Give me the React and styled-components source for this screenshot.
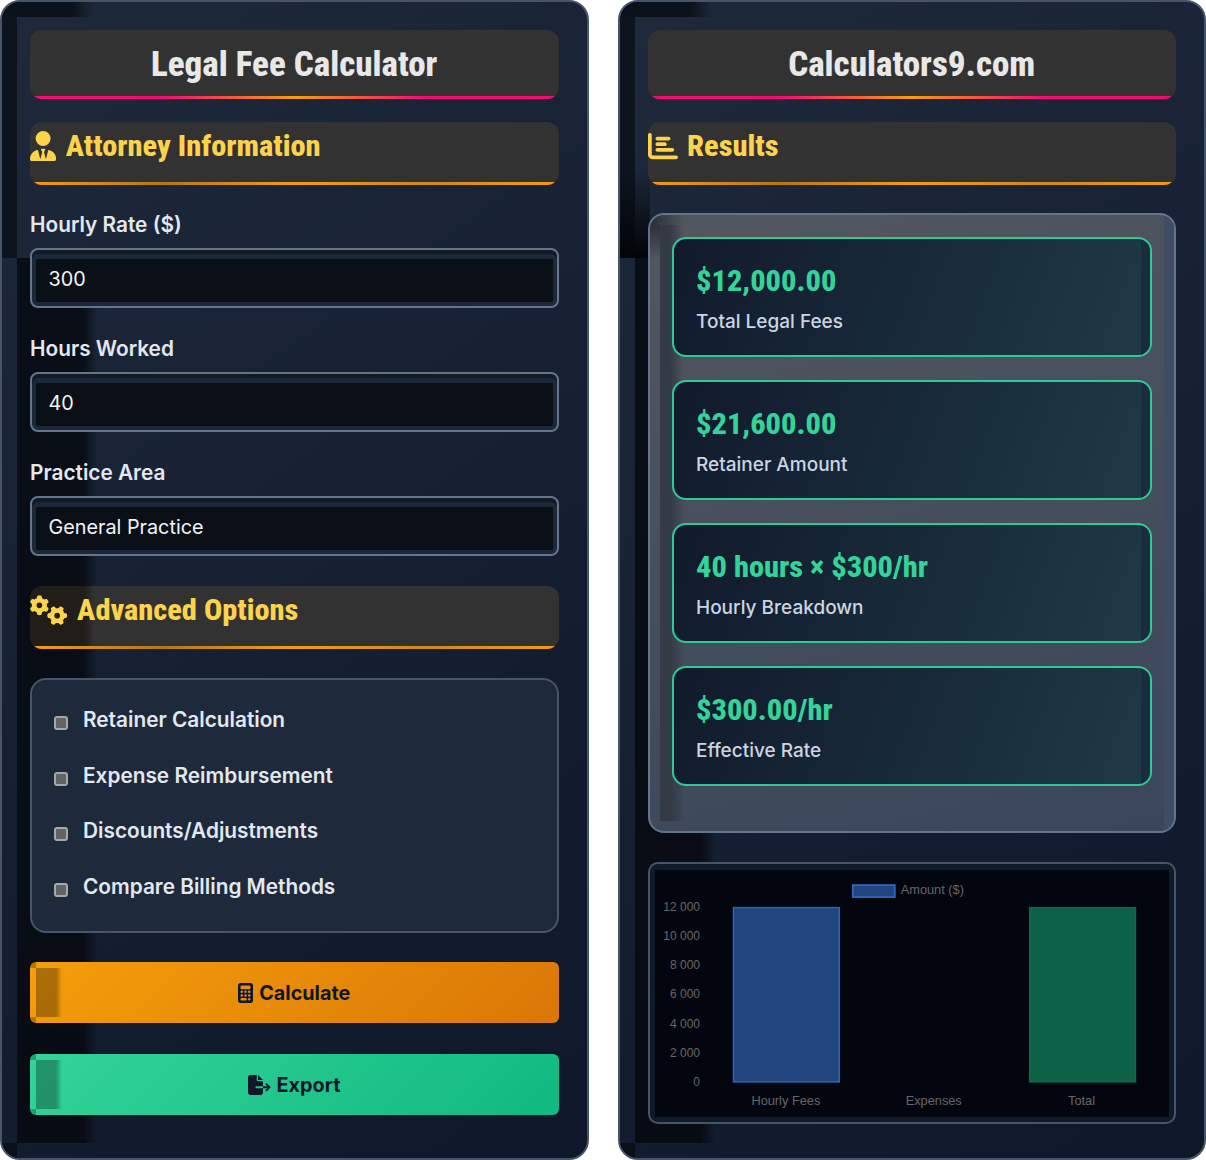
import React from "react";
import styled, { createGlobalStyle } from "styled-components";
import {
  FaUserTie,
  FaGears,
  FaCalculator,
  FaFileExport,
  FaChartBar,
} from "react-icons/fa6";

const GlobalStyle = createGlobalStyle`
  body {
    margin: 0;
    background: #fff;
    font-family: Inter, "Liberation Sans", sans-serif;
  }
  * { box-sizing: border-box; }
`;

const Page = styled.div`
  display: grid;
  grid-template-columns: minmax(0, 1fr) minmax(0, 1fr);
  grid-template-rows: minmax(0, 1fr);
  gap: 29px;
  width: 1206px;
  height: 1160px;
`;

const Panel = styled.section`
  position: relative;
  isolation: isolate;
  border: 2px solid #475569;
  border-radius: 20px;
  padding: 28px;
  background: linear-gradient(145deg, #1e293b, #0f172a);

  &::before {
    content: "";
    position: absolute;
    inset: 0;
    z-index: -1;
    border-radius: 18px;
    background:
      linear-gradient(180deg, transparent, #020408) 0 ${(p) => (p.$deep ? "170px" : "-300px")} / 30px 86px no-repeat,
      linear-gradient(90deg, #0c121b 70px, transparent 92px) 0 0 / 95px 15px no-repeat,
      linear-gradient(#0d141e, #0d141e) 0 0 / 15px 256px no-repeat,
      linear-gradient(90deg, rgba(6, 8, 14, 0.8) 66px, transparent 80px) 15px 256px / 80px 885px no-repeat,
      linear-gradient(#0a0f1a, #0a0f1a) 0 1141px / 15px 15px no-repeat;
  }
`;

const TitleBar = styled.header`
  position: relative;
  overflow: hidden;
  height: 69px;
  margin-bottom: 23px;
  padding-top: 1px;
  display: flex;
  align-items: center;
  justify-content: center;
  border-radius: 12px;
  background: #323232;

  &::after {
    content: "";
    position: absolute;
    left: 0;
    right: 0;
    bottom: 0;
    height: 3px;
    background: linear-gradient(90deg, #f50a78 25%, #f59e0b 50%, #f50a78 75%);
  }
`;

const Title = styled.h1`
  margin: 0;
  font: 800 35px/44px Roboto, sans-serif;
  font-stretch: 75%;
  color: #e8e8e8;
`;

const SectionBar = styled.div`
  position: relative;
  overflow: hidden;
  height: 63px;
  margin-top: ${(p) => p.$top || 0}px;
  margin-bottom: ${(p) => p.$gap}px;
  padding-bottom: 15px;
  display: flex;
  align-items: center;
  gap: 9.6px;
  border-radius: 12px;
  color: #fcd34d;
  background: ${(p) =>
    p.$shaded
      ? "linear-gradient(90deg, #211d19 55px, #323232 64px)"
      : "#323232"};

  svg {
    width: ${(p) => p.$icon}px;
    height: 30px;
    flex: none;
  }

  &::after {
    content: "";
    position: absolute;
    left: 0;
    right: 0;
    bottom: 0;
    height: 3px;
    background: linear-gradient(90deg, #f59e0b, #b5780f 25%, #f59e0b 50%, #d08a0e 75%, #f59e0b);
  }
`;

const SectionTitle = styled.h2`
  margin: 0;
  font: 800 30.4px/36px Roboto, sans-serif;
  font-stretch: 75%;
  color: #fcd34d;
`;

const Field = styled.div`
  display: flex;
  flex-direction: column;
  margin-bottom: 28px;
`;

const Label = styled.label`
  height: 24px;
  margin-bottom: 12px;
  padding-top: 1px;
  font: 600 20.8px/24px Inter, sans-serif;
  color: #e2e8f0;
`;

const insetStrips = `
  box-shadow:
    inset 0 4px 0 #111a25,
    inset 0 9px 0 #1c2839,
    inset 4px 0 0 #1c2839,
    inset -4px 0 0 #1c2839,
    inset 0 -4px 0 #1c2839;
`;

const TextInput = styled.input`
  width: 100%;
  height: 60px;
  padding: 2px 16.5px 0;
  border: 2px solid #64748b;
  border-radius: 8px;
  outline: none;
  font: 400 19.8px Inter, sans-serif;
  color: #f1f5f9;
  background: #0b1017;
  ${insetStrips}
`;

const SelectInput = styled(TextInput).attrs({ as: "select" })`
  appearance: none;
`;

const OptionsCard = styled.div`
  height: 255px;
  margin-bottom: 29px;
  padding: 12px 22px;
  display: flex;
  flex-direction: column;
  border: 2px solid #475569;
  border-radius: 16px;
  background: #1e293b;
`;

const OptionRow = styled.label`
  height: 55.7px;
  display: flex;
  align-items: center;
  gap: 15px;
  font: 600 20.8px/24px Inter, sans-serif;
  color: #e2e8f0;
`;

const Check = styled.input`
  appearance: none;
  width: 14px;
  height: 14px;
  margin: 6px 0 0;
  border: 2px solid #a8a8a8;
  border-radius: 3px;
  background: #636363;
`;

const ActionButton = styled.button`
  position: relative;
  overflow: hidden;
  width: 100%;
  height: 61px;
  margin-bottom: 31px;
  display: flex;
  align-items: center;
  justify-content: center;
  gap: 6px;
  border: none;
  border-radius: 6px;
  font: 700 19.8px Inter, sans-serif;
  color: #0f172a;
  background: ${(p) => p.$bg};

  &:last-child {
    margin-bottom: 0;
  }

  svg {
    width: ${(p) => p.$icon}px;
    height: 20px;
    flex: none;
  }

  /* dark patch at the left end, and the two darker corners */
  &::before {
    content: "";
    position: absolute;
    inset: 0;
    background:
      linear-gradient(90deg, rgba(0, 0, 0, 0.3) 20px, transparent) 6px 6px / 26px 49px no-repeat,
      linear-gradient(rgba(0, 0, 0, 0.25), rgba(0, 0, 0, 0.25)) 0 0 / 6px 6px no-repeat,
      linear-gradient(rgba(0, 0, 0, 0.25), rgba(0, 0, 0, 0.25)) 0 100% / 6px 6px no-repeat;
  }
`;

const ResultsCard = styled.div`
  position: relative;
  isolation: isolate;
  height: 620px;
  margin-bottom: 29px;
  padding: 22px;
  display: flex;
  flex-direction: column;
  gap: 23px;
  border: 2px solid #64748b;
  border-radius: 16px;
  background: linear-gradient(165deg, #52575f, #3a465b);

  &::before {
    content: "";
    position: absolute;
    inset: 0;
    z-index: -1;
    border-radius: 14px;
    background:
      linear-gradient(90deg, rgba(10, 12, 18, 0.55), transparent) 0 0 / 34px 10px no-repeat,
      linear-gradient(180deg, rgba(10, 12, 18, 0.5), transparent) 0 10px / 10px 34px no-repeat,
      linear-gradient(90deg, #343a46 10px, transparent 24px) 10px 10px / 30px 596px no-repeat,
      linear-gradient(#3f4c62, #3f4c62) right 0 top 0 / 10px 100% no-repeat;
  }
`;

const ResultItem = styled.div`
  position: relative;
  overflow: hidden;
  height: 120px;
  padding: 23px 22.5px;
  border: 2px solid #2dcb94;
  border-radius: 14px;
  background: linear-gradient(110deg, #111a2c, #1f3a47);

  &::after {
    content: "";
    position: absolute;
    top: 0;
    right: 0;
    bottom: 0;
    width: 9px;
    background: #1b2c3e;
  }
`;

const ResultValue = styled.div`
  font: 800 30.4px/38px Roboto, sans-serif;
  font-stretch: 75%;
  color: #34d399;
`;

const ResultLabel = styled.div`
  margin-top: 10px;
  font: 500 19px/24px Inter, sans-serif;
  color: #cbd5e1;
`;

const ChartBox = styled.div`
  height: 262px;
  padding: 5.5px;
  border: 2px solid #475569;
  border-radius: 10px;
  background: #0f1a2b;

  svg {
    display: block;
    width: 100%;
    height: 247px;
    background: #03060e;
  }
`;

const tickLabels = [
  ["12 000", 41],
  ["10 000", 70],
  ["8 000", 99],
  ["6 000", 128],
  ["4 000", 158],
  ["2 000", 187],
  ["0", 216],
];

const bars = [
  { x: 78.5, fill: "#21457f", stroke: "#2d66c4" },
  { x: 375, fill: "#0c6146", stroke: "#0d6b4d" },
];

const xLabels = [
  ["Hourly Fees", 131],
  ["Expenses", 279],
  ["Total", 427],
];

function FeeChart() {
  return (
    <ChartBox>
      <svg viewBox="0 0 514 247">
        <g fontFamily="Liberation Sans, sans-serif" fontSize="12" fill="#666">
          <rect x="198" y="15" width="42" height="12" fill="#21457f" stroke="#2d66c4" strokeWidth="1.8" />
          <text x="246" y="24" fontSize="12.8">Amount ($)</text>
          {tickLabels.map(([label, y]) => (
            <text key={label} x="45" y={y} textAnchor="end">{label}</text>
          ))}
          {xLabels.map(([label, x]) => (
            <text key={label} x={x} y="235" fontSize="12.8" textAnchor="middle">{label}</text>
          ))}
        </g>
        {bars.map((b) => (
          <rect key={b.x} x={b.x} y="37.5" width="106" height="174.5" fill={b.fill} stroke={b.stroke} strokeWidth="1.4" />
        ))}
      </svg>
    </ChartBox>
  );
}

const results = [
  ["$12,000.00", "Total Legal Fees"],
  ["$21,600.00", "Retainer Amount"],
  ["40 hours × $300/hr", "Hourly Breakdown"],
  ["$300.00/hr", "Effective Rate"],
];

const options = [
  "Retainer Calculation",
  "Expense Reimbursement",
  "Discounts/Adjustments",
  "Compare Billing Methods",
];

function App() {
  return (
    <>
      <GlobalStyle />
      <Page>
        <Panel>
          <TitleBar>
            <Title>Legal Fee Calculator</Title>
          </TitleBar>
          <SectionBar $gap={27} $icon={26.25}>
            <FaUserTie />
            <SectionTitle>Attorney Information</SectionTitle>
          </SectionBar>
          <Field>
            <Label>Hourly Rate ($)</Label>
            <TextInput type="text" defaultValue="300" />
          </Field>
          <Field>
            <Label>Hours Worked</Label>
            <TextInput type="text" defaultValue="40" />
          </Field>
          <Field>
            <Label>Practice Area</Label>
            <SelectInput defaultValue="General Practice">
              <option>General Practice</option>
            </SelectInput>
          </Field>
          <SectionBar $top={30} $gap={29} $icon={37.5} $shaded>
            <FaGears />
            <SectionTitle>Advanced Options</SectionTitle>
          </SectionBar>
          <OptionsCard>
            {options.map((o) => (
              <OptionRow key={o}>
                <Check type="checkbox" />
                {o}
              </OptionRow>
            ))}
          </OptionsCard>
          <ActionButton $icon={15} $bg="linear-gradient(135deg, #f59e0b, #d97706)">
            <FaCalculator />
            Calculate
          </ActionButton>
          <ActionButton $icon={22.5} $bg="linear-gradient(135deg, #34d399, #10b981)">
            <FaFileExport />
            Export
          </ActionButton>
        </Panel>

        <Panel $deep>
          <TitleBar>
            <Title>Calculators9.com</Title>
          </TitleBar>
          <SectionBar $gap={28} $icon={30}>
            <FaChartBar />
            <SectionTitle>Results</SectionTitle>
          </SectionBar>
          <ResultsCard>
            {results.map(([value, label]) => (
              <ResultItem key={label}>
                <ResultValue>{value}</ResultValue>
                <ResultLabel>{label}</ResultLabel>
              </ResultItem>
            ))}
          </ResultsCard>
          <FeeChart />
        </Panel>
      </Page>
    </>
  );
}

export default App;
